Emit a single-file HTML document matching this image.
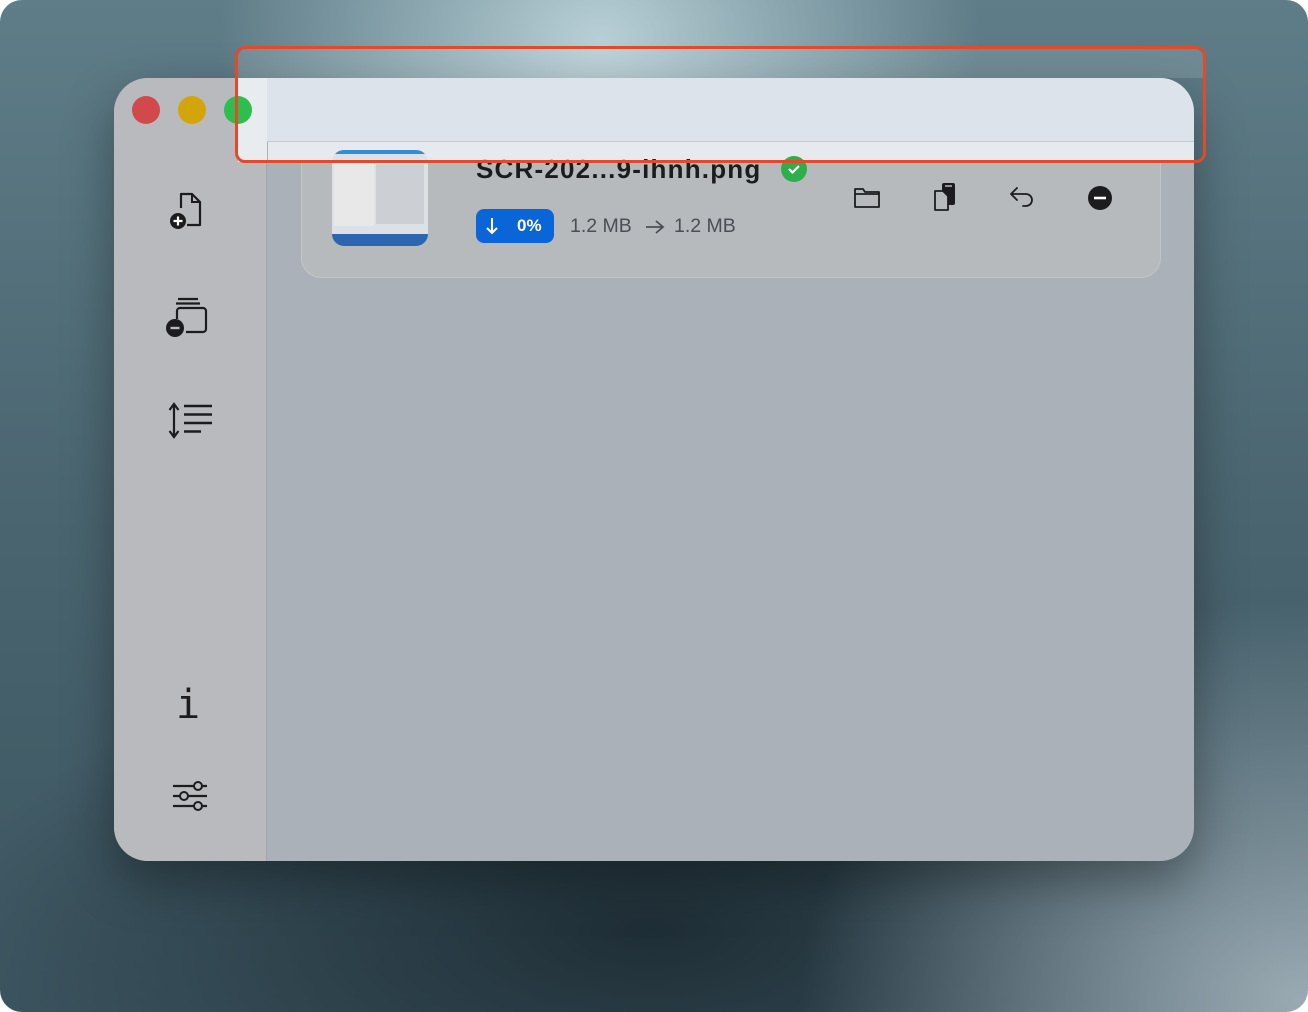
<!DOCTYPE html>
<html><head><style>
html,body{margin:0;padding:0;width:1308px;height:1012px;overflow:hidden;background:#fff}
#bg{position:absolute;left:0;top:0;width:1308px;height:1012px;border-radius:22px;overflow:hidden;
background:radial-gradient(ellipse 380px 300px at 600px 40px,#b8cfd6 0%,#8aa5ae 50%,transparent 100%),
radial-gradient(ellipse 500px 400px at 1300px 1000px,#9aaab3 0%,transparent 100%),
radial-gradient(ellipse 700px 300px at 650px 930px,#1f2e36 0%,transparent 100%),
linear-gradient(180deg,#5f7d88 0%,#4a6570 50%,#3c5560 100%)}
#win{position:absolute;left:114px;top:78px;width:1080px;height:783px;border-radius:34px;overflow:hidden;background:#abb1b9;box-shadow:0 20px 50px rgba(0,0,0,.35)}
#side{position:absolute;left:0;top:0;width:152px;height:783px;background:#b9babd;border-right:1px solid #a3a7ac}
#title{position:absolute;left:153px;top:0;right:0;height:63px;background:#dce3ea;border-bottom:1px solid #c3cad2}
.dot{position:absolute;top:18px;width:28px;height:28px;border-radius:50%}
#card{position:absolute;left:187px;top:50px;width:858px;height:148px;border-radius:20px;background:#b6babd;border:1px solid #c2c6c9}
#cardtop{position:absolute;left:154px;top:64px;width:926px;height:20px;background:#e6e9ed}
#red{position:absolute;left:235px;top:46px;width:965px;height:111px;border:3px solid #e14a2a;border-radius:10px}
#hl{position:absolute;left:238px;top:49px;width:965px;height:29px;background:rgba(255,255,255,.12);border-radius:8px 8px 0 0}
.t{font-family:"Liberation Sans",sans-serif;position:absolute}
svg{position:absolute}
</style></head><body>
<div id="bg"></div>
<div id="win">
 <div id="side"></div>
 <div id="card"></div>
 <div id="title"></div>
 <div id="cardtop"></div>
 <div style="position:absolute;left:124px;top:0;width:29px;height:84px;background:#e9ecef"></div>
 <div class="dot" style="left:18px;background:#d2494c"></div>
 <div class="dot" style="left:64px;background:#d4a50a"></div>
 <div class="dot" style="left:110px;background:#2ebd4e"></div>
 <div style="position:absolute;left:218px;top:72px;width:96px;height:96px;background:#dde1e5;border-radius:12px;overflow:hidden">
  <div style="position:absolute;left:0;top:0;width:96px;height:4px;background:#2f8fd6"></div>
  <div style="position:absolute;left:2px;top:10px;width:40px;height:66px;background:#e8e8e8"></div>
  <div style="position:absolute;left:44px;top:14px;width:48px;height:60px;background:#ccd0d4"></div>
  <div style="position:absolute;left:0;bottom:0;width:96px;height:12px;background:#2d66b0"></div>
 </div>
 <div class="t" style="left:362px;top:76px;font-size:26px;letter-spacing:1.2px;font-weight:bold;color:#1c1c1e">SCR-202...9-ihnh.png</div>
 <div style="position:absolute;left:667px;top:78px;width:26px;height:26px;border-radius:50%;background:#2fae4c"></div>
 <svg style="left:667px;top:78px" width="26" height="26"><path d="M8 13l3.5 3.5L18 10" fill="none" stroke="#fff" stroke-width="2.2"/></svg>
 <div style="position:absolute;left:362px;top:131px;width:78px;height:34px;border-radius:8px;background:#0a66d8"></div>
 <svg style="left:370px;top:138px" width="16" height="20"><path d="M8 2v15M3 12l5 5 5-5" fill="none" stroke="#fff" stroke-width="2"/></svg>
 <div class="t" style="left:403px;top:138px;font-size:17px;font-weight:bold;color:#fff">0%</div>
 <div class="t" style="left:456px;top:137px;font-size:19.5px;color:#4a4f55">1.2 MB</div>
 <svg style="left:530px;top:140px" width="22" height="18"><path d="M2 9h17M12 3l7 6-7 6" fill="none" stroke="#4a4f55" stroke-width="1.8"/></svg>
 <div class="t" style="left:560px;top:137px;font-size:19.5px;color:#4a4f55">1.2 MB</div>
 <svg style="left:738px;top:106px" width="30" height="26"><path d="M3 5h8l2 3h14v15H3z M3 10h24" fill="none" stroke="#1c1c1e" stroke-width="1.8" stroke-linejoin="round"/></svg>
 <svg style="left:818px;top:103px" width="30" height="32"><rect x="10" y="2" width="13" height="22" rx="2" fill="#1c1c1e"/><path d="M3 10h8l5 5v14H3z" fill="#b6babd" stroke="#1c1c1e" stroke-width="1.8" stroke-linejoin="round"/><path d="M13 5h7" stroke="#b6babd" stroke-width="1.5"/></svg>
 <svg style="left:894px;top:106px" width="30" height="26"><path d="M9 4L3 10l6 6M3 10h15a6 6 0 0 1 0 12h-3" fill="none" stroke="#1c1c1e" stroke-width="1.8" stroke-linecap="round" stroke-linejoin="round"/></svg>
 <svg style="left:972px;top:107px" width="28" height="28"><circle cx="14" cy="13" r="12" fill="#1c1c1e"/><path d="M8 13h12" stroke="#fff" stroke-width="2.6"/></svg>
 <svg style="left:52px;top:112px" width="44" height="44"><path d="M15 18V4h11l8 8v23H21" fill="none" stroke="#1c1c1e" stroke-width="2.2" stroke-linejoin="round"/><path d="M26 4v8h8" fill="none" stroke="#1c1c1e" stroke-width="2"/><circle cx="12" cy="31" r="8" fill="#1c1c1e"/><path d="M12 26.5v9M7.5 31h9" stroke="#fff" stroke-width="2.2"/></svg>
 <svg style="left:50px;top:216px" width="48" height="48"><path d="M14 5h20M12 9.5h24" stroke="#1c1c1e" stroke-width="2.2"/><path d="M13 25v-8a3 3 0 0 1 3-3h23a3 3 0 0 1 3 3v18a3 3 0 0 1-3 3H22" fill="none" stroke="#1c1c1e" stroke-width="2.2"/><circle cx="11" cy="34" r="9" fill="#1c1c1e"/><path d="M6.5 34h9" stroke="#b9babd" stroke-width="2.4"/></svg>
 <svg style="left:50px;top:322px" width="52" height="42"><path d="M10 5v31M5.5 10l4.5-6 4.5 6M5.5 31l4.5 6 4.5-6" fill="none" stroke="#1c1c1e" stroke-width="2.2"/><path d="M20 6h28M20 14.5h28M20 23h28M20 31.5h17" stroke="#1c1c1e" stroke-width="2.4"/></svg>
 <div class="t" style="left:62px;top:604px;font-size:40px;font-family:'DejaVu Sans Mono',monospace;color:#1c1c1e">i</div>
 <svg style="left:55px;top:700px" width="44" height="40"><path d="M4 8h34M4 18h34M4 28h34" stroke="#1c1c1e" stroke-width="2.2"/><circle cx="29" cy="8" r="4" fill="#b9babd" stroke="#1c1c1e" stroke-width="2"/><circle cx="15" cy="18" r="4" fill="#b9babd" stroke="#1c1c1e" stroke-width="2"/><circle cx="29" cy="28" r="4" fill="#b9babd" stroke="#1c1c1e" stroke-width="2"/></svg>
</div>
<div id="hl"></div>
<div id="red"></div>
</body></html>
